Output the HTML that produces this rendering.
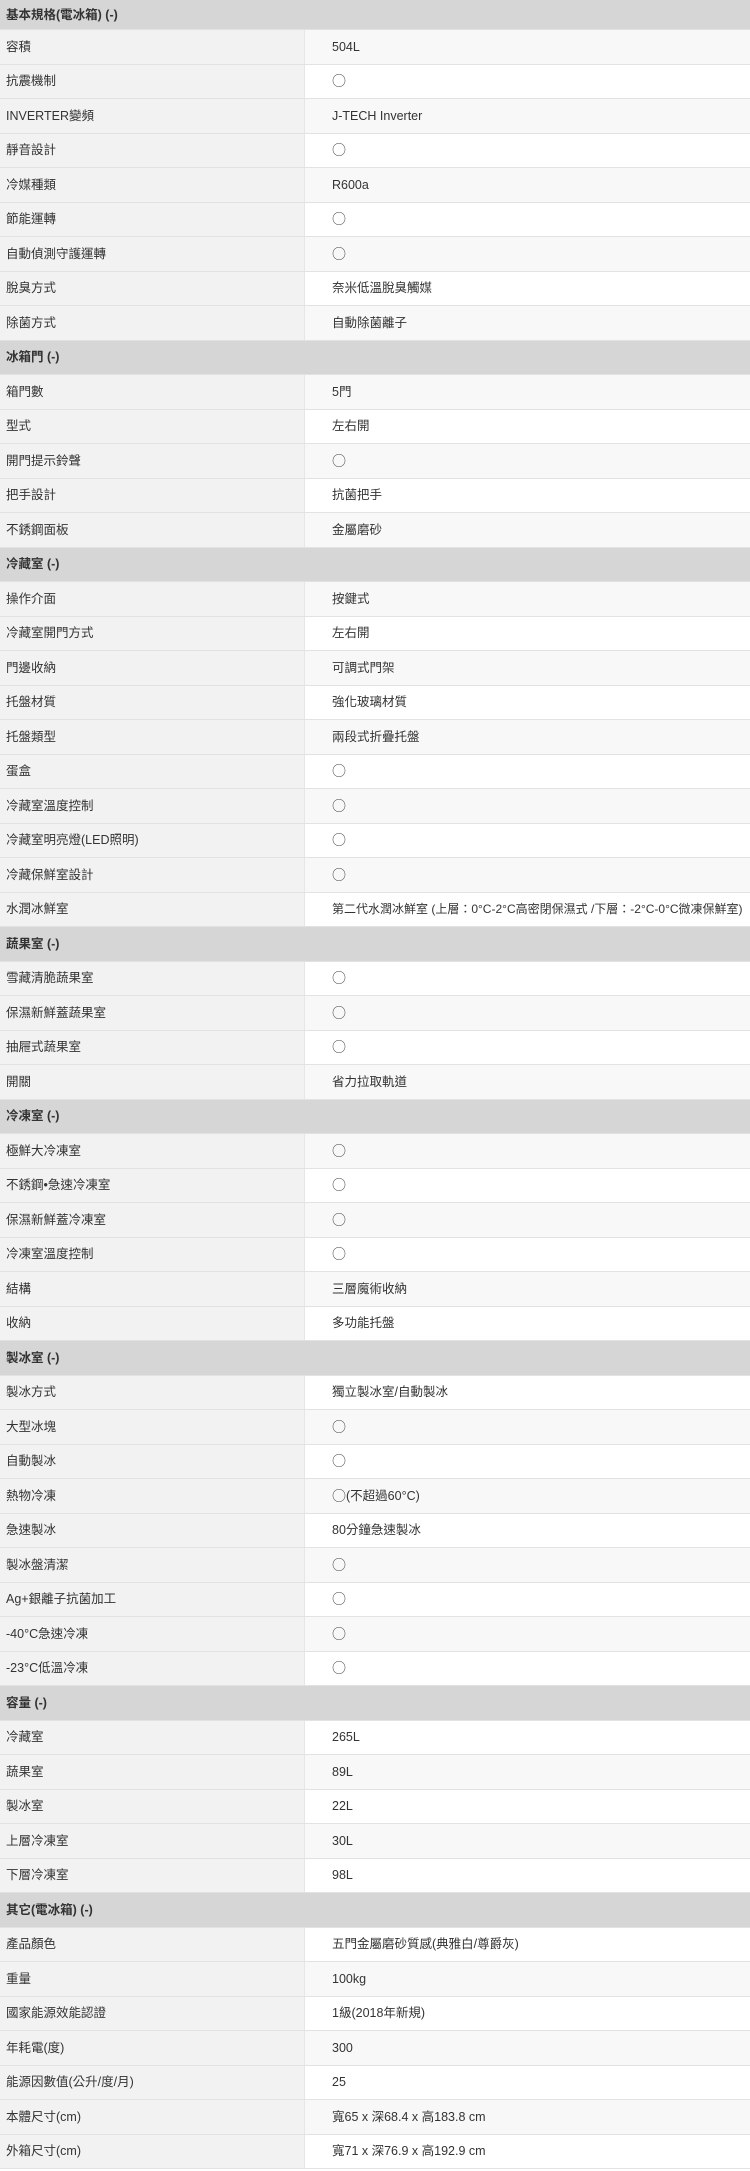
<!DOCTYPE html>
<html><head><meta charset="utf-8"><style>
*{margin:0;padding:0;box-sizing:border-box}
body{width:750px;height:2171px;overflow:hidden;background:#fff;font-family:"Liberation Sans","Noto Sans CJK TC",sans-serif;font-size:12.5px;color:#333;line-height:16px}
.r{display:flex;height:34.5px;border-bottom:1px solid #e2e2e2}
.r .a{width:305px;background:#f2f2f2;border-right:1px solid #e6e6e6;padding-left:6px;display:flex;align-items:center}
.r .b{flex:1;padding-left:27px;display:flex;align-items:center;white-space:nowrap}
.r:nth-child(even) .b{background:#f8f8f8}
.h{height:34.5px;background:#d6d6d6;font-weight:bold;padding-left:6px;display:flex;align-items:center;border-bottom:1px solid #e2e2e2}
.h.f{height:30px}
.o{font-family:"Noto Sans CJK TC",sans-serif;font-size:14px;color:#444}
</style></head><body>
<div class="h f">基本規格(電冰箱) (-)</div>
<div class="r"><div class="a">容積</div><div class="b">504L</div></div>
<div class="r"><div class="a">抗震機制</div><div class="b"><span class="o">○</span></div></div>
<div class="r"><div class="a">INVERTER變頻</div><div class="b">J-TECH Inverter</div></div>
<div class="r"><div class="a">靜音設計</div><div class="b"><span class="o">○</span></div></div>
<div class="r"><div class="a">冷媒種類</div><div class="b">R600a</div></div>
<div class="r"><div class="a">節能運轉</div><div class="b"><span class="o">○</span></div></div>
<div class="r"><div class="a">自動偵測守護運轉</div><div class="b"><span class="o">○</span></div></div>
<div class="r"><div class="a">脫臭方式</div><div class="b">奈米低溫脫臭觸媒</div></div>
<div class="r"><div class="a">除菌方式</div><div class="b">自動除菌離子</div></div>
<div class="h">冰箱門 (-)</div>
<div class="r"><div class="a">箱門數</div><div class="b">5門</div></div>
<div class="r"><div class="a">型式</div><div class="b">左右開</div></div>
<div class="r"><div class="a">開門提示鈴聲</div><div class="b"><span class="o">○</span></div></div>
<div class="r"><div class="a">把手設計</div><div class="b">抗菌把手</div></div>
<div class="r"><div class="a">不銹鋼面板</div><div class="b">金屬磨砂</div></div>
<div class="h">冷藏室 (-)</div>
<div class="r"><div class="a">操作介面</div><div class="b">按鍵式</div></div>
<div class="r"><div class="a">冷藏室開門方式</div><div class="b">左右開</div></div>
<div class="r"><div class="a">門邊收納</div><div class="b">可調式門架</div></div>
<div class="r"><div class="a">托盤材質</div><div class="b">強化玻璃材質</div></div>
<div class="r"><div class="a">托盤類型</div><div class="b">兩段式折疊托盤</div></div>
<div class="r"><div class="a">蛋盒</div><div class="b"><span class="o">○</span></div></div>
<div class="r"><div class="a">冷藏室溫度控制</div><div class="b"><span class="o">○</span></div></div>
<div class="r"><div class="a">冷藏室明亮燈(LED照明)</div><div class="b"><span class="o">○</span></div></div>
<div class="r"><div class="a">冷藏保鮮室設計</div><div class="b"><span class="o">○</span></div></div>
<div class="r"><div class="a">水潤冰鮮室</div><div class="b" style="font-size:12px">第二代水潤冰鮮室 (上層：0°C-2°C高密閉保濕式 /下層：-2°C-0°C微凍保鮮室)</div></div>
<div class="h">蔬果室 (-)</div>
<div class="r"><div class="a">雪藏清脆蔬果室</div><div class="b"><span class="o">○</span></div></div>
<div class="r"><div class="a">保濕新鮮蓋蔬果室</div><div class="b"><span class="o">○</span></div></div>
<div class="r"><div class="a">抽屜式蔬果室</div><div class="b"><span class="o">○</span></div></div>
<div class="r"><div class="a">開關</div><div class="b">省力拉取軌道</div></div>
<div class="h">冷凍室 (-)</div>
<div class="r"><div class="a">極鮮大冷凍室</div><div class="b"><span class="o">○</span></div></div>
<div class="r"><div class="a">不銹鋼•急速冷凍室</div><div class="b"><span class="o">○</span></div></div>
<div class="r"><div class="a">保濕新鮮蓋冷凍室</div><div class="b"><span class="o">○</span></div></div>
<div class="r"><div class="a">冷凍室溫度控制</div><div class="b"><span class="o">○</span></div></div>
<div class="r"><div class="a">結構</div><div class="b">三層魔術收納</div></div>
<div class="r"><div class="a">收納</div><div class="b">多功能托盤</div></div>
<div class="h">製冰室 (-)</div>
<div class="r"><div class="a">製冰方式</div><div class="b">獨立製冰室/自動製冰</div></div>
<div class="r"><div class="a">大型冰塊</div><div class="b"><span class="o">○</span></div></div>
<div class="r"><div class="a">自動製冰</div><div class="b"><span class="o">○</span></div></div>
<div class="r"><div class="a">熱物冷凍</div><div class="b"><span class="o">○</span>(不超過60°C)</div></div>
<div class="r"><div class="a">急速製冰</div><div class="b">80分鐘急速製冰</div></div>
<div class="r"><div class="a">製冰盤清潔</div><div class="b"><span class="o">○</span></div></div>
<div class="r"><div class="a">Ag+銀離子抗菌加工</div><div class="b"><span class="o">○</span></div></div>
<div class="r"><div class="a">-40°C急速冷凍</div><div class="b"><span class="o">○</span></div></div>
<div class="r"><div class="a">-23°C低溫冷凍</div><div class="b"><span class="o">○</span></div></div>
<div class="h">容量 (-)</div>
<div class="r"><div class="a">冷藏室</div><div class="b">265L</div></div>
<div class="r"><div class="a">蔬果室</div><div class="b">89L</div></div>
<div class="r"><div class="a">製冰室</div><div class="b">22L</div></div>
<div class="r"><div class="a">上層冷凍室</div><div class="b">30L</div></div>
<div class="r"><div class="a">下層冷凍室</div><div class="b">98L</div></div>
<div class="h">其它(電冰箱) (-)</div>
<div class="r"><div class="a">產品顏色</div><div class="b">五門金屬磨砂質感(典雅白/尊爵灰)</div></div>
<div class="r"><div class="a">重量</div><div class="b">100kg</div></div>
<div class="r"><div class="a">國家能源效能認證</div><div class="b">1級(2018年新規)</div></div>
<div class="r"><div class="a">年耗電(度)</div><div class="b">300</div></div>
<div class="r"><div class="a">能源因數值(公升/度/月)</div><div class="b">25</div></div>
<div class="r"><div class="a">本體尺寸(cm)</div><div class="b">寬65 x 深68.4 x 高183.8 cm</div></div>
<div class="r"><div class="a">外箱尺寸(cm)</div><div class="b">寬71 x 深76.9 x 高192.9 cm</div></div>
</body></html>
